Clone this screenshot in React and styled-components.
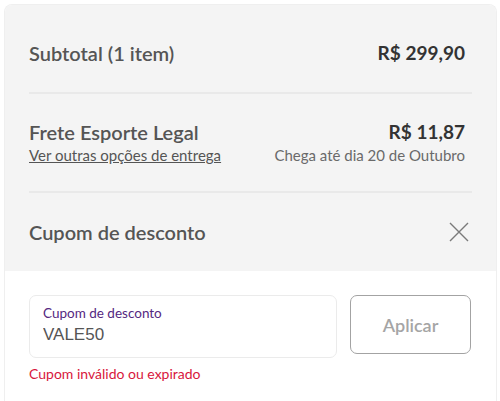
import React from "react";
import styled, { createGlobalStyle } from "styled-components";

const GlobalStyle = createGlobalStyle`
  html, body {
    margin: 0;
    padding: 0;
    background: #ffffff;
  }
  * {
    box-sizing: border-box;
  }
`;

const Page = styled.div`
  padding: 4px 3px 0 4px;
  font-family: Lato, "Noto Sans", sans-serif;
`;

const Card = styled.div`
  border: 1px solid #efefef;
  border-bottom: none;
  border-radius: 8px 8px 0 0;
  overflow: hidden;
  min-height: 397px;
`;

const Summary = styled.div`
  background: #f4f4f4;
  padding: 0 24px;
`;

const Row = styled.div`
  display: flex;
  justify-content: space-between;
  align-items: ${(p) => (p.$center ? "center" : "flex-start")};
  padding: ${(p) => p.$pad};
  padding-right: 7px;
  border-bottom: ${(p) => (p.$last ? "none" : "2px solid #e9e9e9")};
`;

const Col = styled.div`
  display: flex;
  flex-direction: column;
  align-items: ${(p) => (p.$right ? "flex-end" : "flex-start")};
`;

const Label = styled.span`
  font-size: 20px;
  line-height: 24px;
  font-weight: 600;
  color: #555555;
`;

const Value = styled.span`
  font-size: 19px;
  line-height: 24px;
  font-weight: 700;
  color: #333333;
`;

const SubLink = styled.a`
  font-size: 15px;
  line-height: 22px;
  color: #555555;
  text-decoration: underline;
  cursor: pointer;
`;

const SubText = styled.span`
  font-size: 15px;
  line-height: 22px;
  color: #6a6a6a;
`;

const CloseButton = styled.button`
  border: none;
  background: none;
  padding: 0;
  margin-right: -5px;
  width: 22px;
  height: 22px;
  display: flex;
  align-items: center;
  justify-content: center;
  cursor: pointer;
`;

const CouponArea = styled.div`
  background: #ffffff;
  padding: 24px 25px 0 24px;
`;

const CouponForm = styled.div`
  display: flex;
  align-items: flex-start;
  gap: 13px;
`;

const Field = styled.label`
  flex: 1;
  height: 63px;
  border: 1px solid #ebebeb;
  border-radius: 7px;
  padding: 8px 13px 0;
  display: flex;
  flex-direction: column;
`;

const FieldLabel = styled.span`
  font-size: 13.5px;
  line-height: 18px;
  color: #55287f;
`;

const FieldInput = styled.input`
  border: none;
  outline: none;
  background: transparent;
  padding: 0;
  margin-top: 1px;
  font-family: "Liberation Sans", Arial, sans-serif;
  font-size: 17px;
  line-height: 24px;
  color: #555555;
`;

const ApplyButton = styled.button`
  width: 121px;
  height: 59px;
  border: 1px solid #a3a3a3;
  border-radius: 7px;
  background: #ffffff;
  font-family: Lato, "Noto Sans", sans-serif;
  font-size: 18px;
  font-weight: 600;
  color: #a5a5a5;
  cursor: pointer;
`;

const ErrorText = styled.p`
  margin: 7px 0 0;
  font-size: 14px;
  line-height: 18px;
  color: #d8163c;
`;

export default function App() {
  return (
    <>
      <GlobalStyle />
      <Page>
        <Card>
          <Summary>
            <Row $pad="36px 0 27px" $center>
              <Label>Subtotal (1 item)</Label>
              <Value>R$ 299,90</Value>
            </Row>
            <Row $pad="26px 0 25px">
              <Col>
                <Label>Frete Esporte Legal</Label>
                <SubLink>Ver outras opções de entrega</SubLink>
              </Col>
              <Col $right>
                <Value>R$ 11,87</Value>
                <SubText>Chega até dia 20 de Outubro</SubText>
              </Col>
            </Row>
            <Row $pad="27px 0 27px" $center $last>
              <Label>Cupom de desconto</Label>
              <CloseButton aria-label="Fechar">
                <svg width="20" height="20" viewBox="0 0 20 20">
                  <path
                    d="M1 1 L19 19 M19 1 L1 19"
                    stroke="#7a7a7a"
                    strokeWidth="1.4"
                    fill="none"
                  />
                </svg>
              </CloseButton>
            </Row>
          </Summary>
          <CouponArea>
            <CouponForm>
              <Field>
                <FieldLabel>Cupom de desconto</FieldLabel>
                <FieldInput defaultValue="VALE50" />
              </Field>
              <ApplyButton>Aplicar</ApplyButton>
            </CouponForm>
            <ErrorText>Cupom inválido ou expirado</ErrorText>
          </CouponArea>
        </Card>
      </Page>
    </>
  );
}
